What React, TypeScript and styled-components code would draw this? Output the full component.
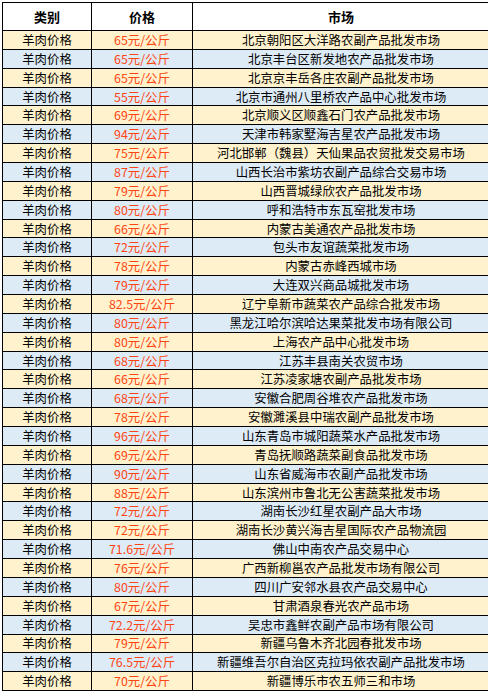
import * as React from 'react';
import styled, { createGlobalStyle } from 'styled-components';

const Global = createGlobalStyle`
  html, body { margin: 0; padding: 0; background: #fff; }
  body { font-family: "Noto Sans CJK SC", "Liberation Sans", sans-serif; }
`;

const Wrap = styled.div`
  padding: 2px;
`;

const Table = styled.table`
  border-collapse: collapse;
  table-layout: fixed;
  width: 484px;
  font-size: 12.4px;
  color: #000;
`;

const Th = styled.th<{ $w: number }>`
  width: ${(p) => p.$w}px;
  height: 27px;
  padding: 0;
  border: 1px solid #000;
  font-weight: bold;
  font-size: 13px;
  background: #fff;
  text-align: center;
`;

const Row = styled.tr<{ $alt: boolean }>`
  height: 18.86px;
  background: ${(p) => (p.$alt ? '#ddebf7' : '#fff2cc')};
`;

const Cell = styled.td`
  padding: 0;
  border: 1px solid #000;
  text-align: center;
  white-space: nowrap;
  line-height: 16px;
  overflow: hidden;
`;

const Price = styled(Cell)`
  color: #ff4411;
`;

const rows: [string, string][] = [
  ['65', '北京朝阳区大洋路农副产品批发市场'],
  ['65', '北京丰台区新发地农产品批发市场'],
  ['65', '北京京丰岳各庄农副产品批发市场'],
  ['55', '北京市通州八里桥农产品中心批发市场'],
  ['69', '北京顺义区顺鑫石门农产品批发市场'],
  ['94', '天津市韩家墅海吉星农产品批发市场'],
  ['75', '河北邯郸（魏县）天仙果品农贸批发交易市场'],
  ['87', '山西长治市紫坊农副产品综合交易市场'],
  ['79', '山西晋城绿欣农产品批发市场'],
  ['80', '呼和浩特市东瓦窑批发市场'],
  ['66', '内蒙古美通农产品批发市场'],
  ['72', '包头市友谊蔬菜批发市场'],
  ['78', '内蒙古赤峰西城市场'],
  ['79', '大连双兴商品城批发市场'],
  ['82.5', '辽宁阜新市蔬菜农产品综合批发市场'],
  ['80', '黑龙江哈尔滨哈达果菜批发市场有限公司'],
  ['80', '上海农产品中心批发市场'],
  ['68', '江苏丰县南关农贸市场'],
  ['66', '江苏凌家塘农副产品批发市场'],
  ['68', '安徽合肥周谷堆农产品批发市场'],
  ['78', '安徽濉溪县中瑞农副产品批发市场'],
  ['96', '山东青岛市城阳蔬菜水产品批发市场'],
  ['69', '青岛抚顺路蔬菜副食品批发市场'],
  ['90', '山东省威海市农副产品批发市场'],
  ['88', '山东滨州市鲁北无公害蔬菜批发市场'],
  ['72', '湖南长沙红星农副产品大市场'],
  ['72', '湖南长沙黄兴海吉星国际农产品物流园'],
  ['71.6', '佛山中南农产品交易中心'],
  ['76', '广西新柳邕农产品批发市场有限公司'],
  ['80', '四川广安邻水县农产品交易中心'],
  ['67', '甘肃酒泉春光农产品市场'],
  ['72.2', '吴忠市鑫鲜农副产品市场有限公司'],
  ['79', '新疆乌鲁木齐北园春批发市场'],
  ['76.5', '新疆维吾尔自治区克拉玛依农副产品批发市场'],
  ['70', '新疆博乐市农五师三和市场'],
];

export default function App() {
  return (
    <Wrap>
      <Global />
      <Table>
        <thead>
          <tr>
            <Th $w={88}>类别</Th>
            <Th $w={100}>价格</Th>
            <Th $w={296}>市场</Th>
          </tr>
        </thead>
        <tbody>
          {rows.map(([price, market], i) => (
            <Row key={i} $alt={i % 2 === 1}>
              <Cell>羊肉价格</Cell>
              <Price>{price}元/公斤</Price>
              <Cell>{market}</Cell>
            </Row>
          ))}
        </tbody>
      </Table>
    </Wrap>
  );
}
